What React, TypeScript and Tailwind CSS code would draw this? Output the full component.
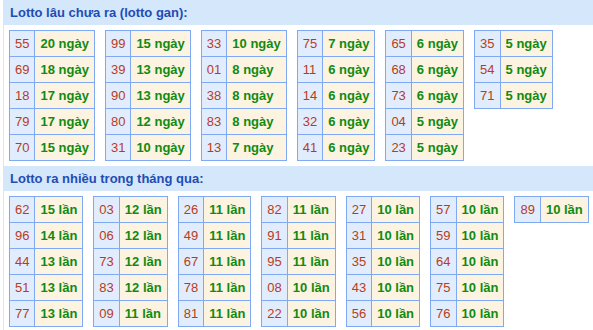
import React from 'react';

type Row = [string, number];

const ganTables: Row[][] = [
  [['55', 20], ['69', 18], ['18', 17], ['79', 17], ['70', 15]],
  [['99', 15], ['39', 13], ['90', 13], ['80', 12], ['31', 10]],
  [['33', 10], ['01', 8], ['38', 8], ['83', 8], ['13', 7]],
  [['75', 7], ['11', 6], ['14', 6], ['32', 6], ['41', 6]],
  [['65', 6], ['68', 6], ['73', 6], ['04', 5], ['23', 5]],
  [['35', 5], ['54', 5], ['71', 5]],
];

const hotTables: Row[][] = [
  [['62', 15], ['96', 14], ['44', 13], ['51', 13], ['77', 13]],
  [['03', 12], ['06', 12], ['73', 12], ['83', 12], ['09', 11]],
  [['26', 11], ['49', 11], ['67', 11], ['78', 11], ['81', 11]],
  [['82', 11], ['91', 11], ['95', 11], ['08', 10], ['22', 10]],
  [['27', 10], ['31', 10], ['35', 10], ['43', 10], ['56', 10]],
  [['57', 10], ['59', 10], ['64', 10], ['75', 10], ['76', 10]],
  [['89', 10]],
];

const LottoTable = ({ rows, unit }: { rows: Row[]; unit: string }) => (
  <div className="shrink-0 grid grid-cols-[auto_auto] border-t border-l border-[#80a9f3] whitespace-nowrap">
    {rows.map(([num, count]) => (
      <React.Fragment key={num}>
        <div className="h-[26px] px-[5px] flex items-center border-r border-b border-[#80a9f3] bg-[#e1edfd] text-[#b83c1c]">
          {num}
        </div>
        <div className="h-[26px] px-[5px] flex items-center border-r border-b border-[#80a9f3] bg-[#fdf3e1] text-[#118a11] font-bold">
          {count} {unit}
        </div>
      </React.Fragment>
    ))}
  </div>
);

const Section = ({ title, tables, unit }: { title: string; tables: Row[][]; unit: string }) => (
  <div>
    <div className="h-[25px] flex items-center pl-[6px] bg-[#d4e7fb] text-[#1f4db3] font-bold text-[13px]">
      {title}
    </div>
    <div className="flex items-start gap-[10px] pl-[5px] py-[5px]">
      {tables.map((rows, i) => (
        <LottoTable key={i} rows={rows} unit={unit} />
      ))}
    </div>
  </div>
);

export default function App() {
  return (
    <div className="w-[593px] h-[330px] bg-white pl-[3px] font-['Liberation_Sans',Arial,sans-serif] text-[13px]">
      <div className="border-l border-[#d4e7fb] h-full">
        <Section title="Lotto lâu chưa ra (lotto gan):" tables={ganTables} unit="ngày" />
        <Section title="Lotto ra nhiều trong tháng qua:" tables={hotTables} unit="lần" />
      </div>
    </div>
  );
}
